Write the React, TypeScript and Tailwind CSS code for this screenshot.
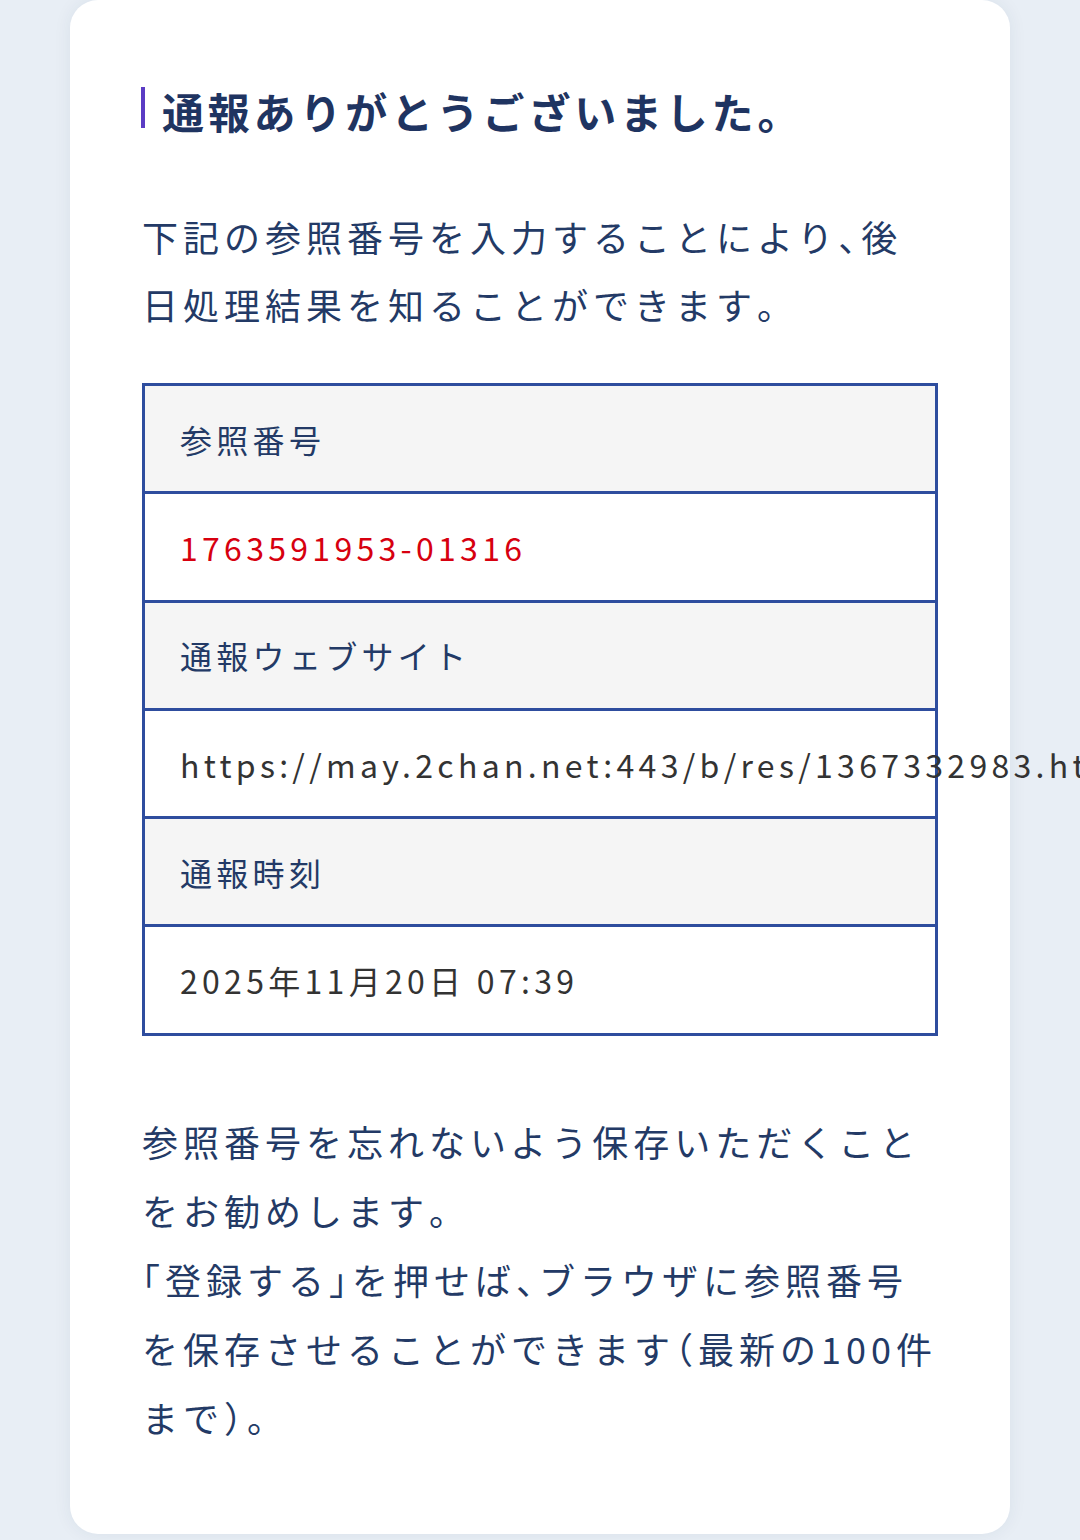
const rows = [
  { label: "参照番号", value: "1763591953-01316", tone: "red" },
  { label: "通報ウェブサイト", value: "https://may.2chan.net:443/b/res/1367332983.htm", tone: "plain" },
  { label: "通報時刻", value: "2025年11月20日 07:39", tone: "plain" },
];

function Half({ children }: { children: React.ReactNode }) {
  // 約物だけ半角にする
  return <span className="[font-feature-settings:'halt']">{children}</span>;
}

function ResultTable() {
  return (
    <div className="mt-[45px] border-[3px] border-[#2e4d9e] text-[32px] tracking-[4.3px]">
      {rows.map((row, i) => (
        <div key={row.label}>
          <div
            className={`flex items-center pl-[35px] bg-[#f5f5f5] text-[#233a66] ${
              i > 0 ? "h-[108.3px] border-t-[3px] border-[#2e4d9e]" : "h-[105.3px]"
            }`}
          >
            {row.label}
          </div>
          <div
            className={`h-[108.3px] flex items-center pl-[35px] bg-white whitespace-nowrap border-t-[3px] border-[#2e4d9e] ${
              row.tone === "red" ? "text-[#d7000f]" : "text-[#333333]"
            }`}
          >
            {row.value}
          </div>
        </div>
      ))}
    </div>
  );
}

export default function App() {
  return (
    <div
      className="min-h-screen bg-[#e8eef5] px-[70px] pb-[7px]"
      style={{ fontFamily: '"Noto Sans CJK JP", "Noto Sans", sans-serif' }}
    >
      <div className="bg-white rounded-[28px] shadow-[0_0_18px_rgba(30,50,90,0.07)] px-[72px] pt-[87px] pb-[82px]">
        <h1 className="flex items-start -ml-px text-[42px] leading-[48px] font-bold tracking-[3.8px] text-[#1f3461]">
          <span className="w-1 h-[41px] bg-[#5b3cc4] shrink-0" />
          <span className="ml-[17px]">通報ありがとうございました。</span>
        </h1>

        <p className="mt-[67px] text-[36px] leading-[68px] tracking-[5px] text-[#233a66]">
          下記の参照番号を入力することにより<Half>、</Half>後日処理結果を知ることができます<Half>。</Half>
        </p>

        <ResultTable />

        <p className="mt-[71px] text-[36px] leading-[69px] tracking-[5px] text-[#233a66]">
          参照番号を忘れないよう保存いただくことをお勧めします<Half>。</Half>
          <br />
          <Half>「</Half>登録する<Half>」</Half>を押せば<Half>、</Half>ブラウザに参照番号を保存させることができます<Half>（</Half>最新の100件まで<Half>）。</Half>
        </p>
      </div>
    </div>
  );
}
